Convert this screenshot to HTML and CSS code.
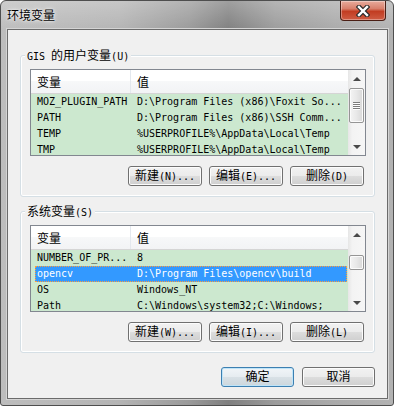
FILE: index.html
```html
<!DOCTYPE html>
<html lang="zh-CN">

<head>
    <meta charset="UTF-8">
    <title>环境变量</title>
    <link rel="stylesheet" href="styles.css">
</head>

<body>
    <!-- Janela -->
    <div class="window">
        <div class="titlebar">
            <span class="title zh">环境变量</span>
            <button class="close" aria-label="关闭">
                <svg width="14" height="12" viewBox="0 0 14 12">
                    <path d="M3 2 L11 10 M11 2 L3 10" stroke="#2b2b2b" stroke-width="4.6" stroke-linecap="square" fill="none"/>
                    <path d="M3 2 L11 10 M11 2 L3 10" stroke="#fff" stroke-width="2.4" stroke-linecap="square" fill="none"/>
                </svg>
            </button>
        </div>

        <div class="client">
            <!-- Variáveis do usuário -->
            <div class="group">
                <div class="legend">GIS <span class="zh">的用户变量</span>(U)</div>
                <div class="listview">
                    <div class="lv-main">
                        <div class="lv-header">
                            <div class="col1"><span class="zh">变量</span></div>
                            <div class="col2"><span class="zh">值</span></div>
                        </div>
                        <div class="lv-row">
                            <div class="col1">MOZ_PLUGIN_PATH</div>
                            <div class="col2">D:\Program Files (x86)\Foxit So...</div>
                        </div>
                        <div class="lv-row">
                            <div class="col1">PATH</div>
                            <div class="col2">D:\Program Files (x86)\SSH Comm...</div>
                        </div>
                        <div class="lv-row">
                            <div class="col1">TEMP</div>
                            <div class="col2">%USERPROFILE%\AppData\Local\Temp</div>
                        </div>
                        <div class="lv-row">
                            <div class="col1">TMP</div>
                            <div class="col2">%USERPROFILE%\AppData\Local\Temp</div>
                        </div>
                    </div>
                    <div class="vscroll">
                        <div class="sb-btn"><span class="arrow-up"></span></div>
                        <div class="sb-track">
                            <div class="sb-thumb thumb-user">
                                <span class="grip"></span>
                            </div>
                        </div>
                        <div class="sb-btn"><span class="arrow-down"></span></div>
                    </div>
                </div>
                <div class="btn-row">
                    <button class="btn"><span class="zh">新建</span>(N)...</button>
                    <button class="btn"><span class="zh">编辑</span>(E)...</button>
                    <button class="btn"><span class="zh">删除</span>(D)</button>
                </div>
            </div>

            <!-- Variáveis do sistema -->
            <div class="group group-sys">
                <div class="legend"><span class="zh">系统变量</span>(S)</div>
                <div class="listview">
                    <div class="lv-main">
                        <div class="lv-header">
                            <div class="col1"><span class="zh">变量</span></div>
                            <div class="col2"><span class="zh">值</span></div>
                        </div>
                        <div class="lv-row">
                            <div class="col1">NUMBER_OF_PR...</div>
                            <div class="col2">8</div>
                        </div>
                        <div class="lv-row selected">
                            <div class="col1">opencv</div>
                            <div class="col2">D:\Program Files\opencv\build</div>
                        </div>
                        <div class="lv-row">
                            <div class="col1">OS</div>
                            <div class="col2">Windows_NT</div>
                        </div>
                        <div class="lv-row">
                            <div class="col1">Path</div>
                            <div class="col2">C:\Windows\system32;C:\Windows;</div>
                        </div>
                    </div>
                    <div class="vscroll">
                        <div class="sb-btn"><span class="arrow-up"></span></div>
                        <div class="sb-track">
                            <div class="sb-thumb thumb-sys"></div>
                        </div>
                        <div class="sb-btn"><span class="arrow-down"></span></div>
                    </div>
                </div>
                <div class="btn-row">
                    <button class="btn"><span class="zh">新建</span>(W)...</button>
                    <button class="btn"><span class="zh">编辑</span>(I)...</button>
                    <button class="btn"><span class="zh">删除</span>(L)</button>
                </div>
            </div>

            <!-- Botões finais -->
            <div class="footer">
                <button class="btn btn-default"><span class="zh">确定</span></button>
                <button class="btn"><span class="zh">取消</span></button>
            </div>
        </div>
    </div>
</body>

</html>
```

FILE: styles.css
```css
* {
    box-sizing: border-box;
}

body {
    margin: 0;
    background: #fff;
    font-family: "DejaVu Sans Mono", monospace;
    font-size: 10px;
    color: #000;
}

/* Texto chinês */
.zh {
    font-family: "Noto Sans CJK SC", sans-serif;
    font-size: 12px;
}

/* Moldura da janela */
.window {
    width: 394px;
    height: 406px;
    border: 1px solid #4e4e4e;
    border-radius: 6px 6px 3px 3px;
    background:
        linear-gradient(rgba(255, 255, 255, 0.25), rgba(255, 255, 255, 0) 30px),
        linear-gradient(to right, #bdbdbd 0%, #b4b4b4 30%, #9a9a9a 48%, #7f7f7f 58%, #9c9c9c 70%, #aaaaaa 85%, #b2b2b2 100%);
    display: flex;
    flex-direction: column;
    overflow: hidden;
}

.titlebar {
    height: 28px;
    display: flex;
    justify-content: space-between;
    align-items: flex-start;
    padding: 0 7px 0 6px;
}

.title {
    line-height: 28px;
    text-shadow: 0 0 5px #fff, 0 0 2px #fff;
}

.close {
    width: 46px;
    height: 20px;
    padding: 0;
    border: 1px solid #4a1e14;
    border-top: none;
    border-radius: 0 0 4px 4px;
    background: linear-gradient(#e8ab9c 0%, #d8806c 40%, #c23d22 55%, #cf5c43 100%);
    box-shadow: inset 0 0 0 1px rgba(255, 255, 255, 0.35);
    display: flex;
    align-items: center;
    justify-content: center;
}

/* Área do cliente */
.client {
    flex: 1;
    margin: 0 5px 6px 6px;
    border: 1px solid #6b6b6b;
    box-shadow: 0 0 0 1px #d4d4d4;
    background: #f0f0f0;
    padding: 25px 12px 10px 12px;
    display: flex;
    flex-direction: column;
}

/* Caixa de grupo */
.group {
    border: 1px solid #d5dfe5;
    border-radius: 3px;
    box-shadow: inset 0 0 0 1px #fff;
    display: flex;
    flex-direction: column;
}

.group-sys {
    margin-top: 14px;
}

.legend {
    align-self: flex-start;
    margin: -8px 0 0 4px;
    padding: 0 2px;
    height: 14px;
    line-height: 14px;
    background: #f0f0f0;
    white-space: nowrap;
}

/* Lista */
.listview {
    width: 336px;
    height: 87px;
    margin: 7px 0 0 9px;
    border: 1px solid #828790;
    background: #cce8cf;
    display: flex;
}

.lv-main {
    flex: 1;
    overflow: hidden;
}

.lv-header {
    height: 24px;
    display: flex;
    background: linear-gradient(#fff 0%, #fff 50%, #f7f8f9 50%, #f2f3f5 100%);
    border-bottom: 1px solid #d5d5d5;
}

.lv-header .col1 {
    width: 100px;
    padding-left: 6px;
    border-right: 1px solid #e3e8ee;
    line-height: 23px;
}

.lv-header .col2 {
    padding-left: 6px;
    line-height: 23px;
}

.lv-row {
    margin-left: 4px;
    width: 312px;
    height: 16px;
    line-height: 16px;
    display: flex;
    white-space: nowrap;
}

.lv-row .col1 {
    width: 96px;
    padding-left: 2px;
    overflow: hidden;
}

.lv-row .col2 {
    flex: 1;
    padding-left: 6px;
    overflow: hidden;
}

.lv-row.selected {
    background: #3399ff;
    color: #fff;
    outline: 1px dotted #ff9c3a;
    outline-offset: -1px;
}

/* Barra de rolagem */
.vscroll {
    width: 17px;
    display: flex;
    flex-direction: column;
    background: linear-gradient(to right, #e6e6e6, #f3f3f3 25%, #f6f6f6);
}

.sb-btn {
    height: 17px;
    display: flex;
    align-items: center;
    justify-content: center;
}

.arrow-up,
.arrow-down {
    width: 0;
    height: 0;
    border-left: 4px solid transparent;
    border-right: 4px solid transparent;
}

.arrow-up {
    border-bottom: 4px solid #4a4a4a;
}

.arrow-down {
    border-top: 4px solid #4a4a4a;
}

.sb-track {
    flex: 1;
}

.sb-thumb {
    margin: 1px 1px 0 1px;
    border: 1px solid #959595;
    border-radius: 2px;
    background: linear-gradient(to right, #f4f4f4, #e8e8e8 50%, #d8d8d8);
    box-shadow: inset 0 0 0 1px #fbfbfb;
    display: flex;
    align-items: center;
    justify-content: center;
}

.thumb-user {
    height: 35px;
}

.thumb-sys {
    margin-top: 12px;
    height: 15px;
}

.grip {
    width: 7px;
    height: 8px;
    background: repeating-linear-gradient(#7d7d7d 0, #7d7d7d 1px, #fff 1px, #fff 2px);
}

/* Botões */
.btn-row {
    display: flex;
    justify-content: flex-end;
    gap: 7px;
    margin: 10px 10px 10px 0;
}

.btn {
    width: 74px;
    height: 20px;
    padding: 0;
    border: 1px solid #707070;
    border-radius: 3px;
    background: linear-gradient(#f2f2f2 0%, #ebebeb 50%, #dddddd 50%, #cfcfcf 100%);
    box-shadow: inset 0 0 0 1px #fcfcfc;
    font-family: "DejaVu Sans Mono", monospace;
    font-size: 10px;
    color: #000;
    line-height: 16px;
    white-space: nowrap;
}

.btn-default {
    border-color: #3c7fb1;
    background: linear-gradient(#f1f5f8 0%, #e6ecf0 50%, #d9e1e6 50%, #ccd6dc 100%);
    box-shadow: inset 0 0 0 1px #bfe4f8;
}

.footer {
    display: flex;
    justify-content: flex-end;
    gap: 8px;
    margin-top: 14px;
}

.footer .btn {
    width: 73px;
}
```
